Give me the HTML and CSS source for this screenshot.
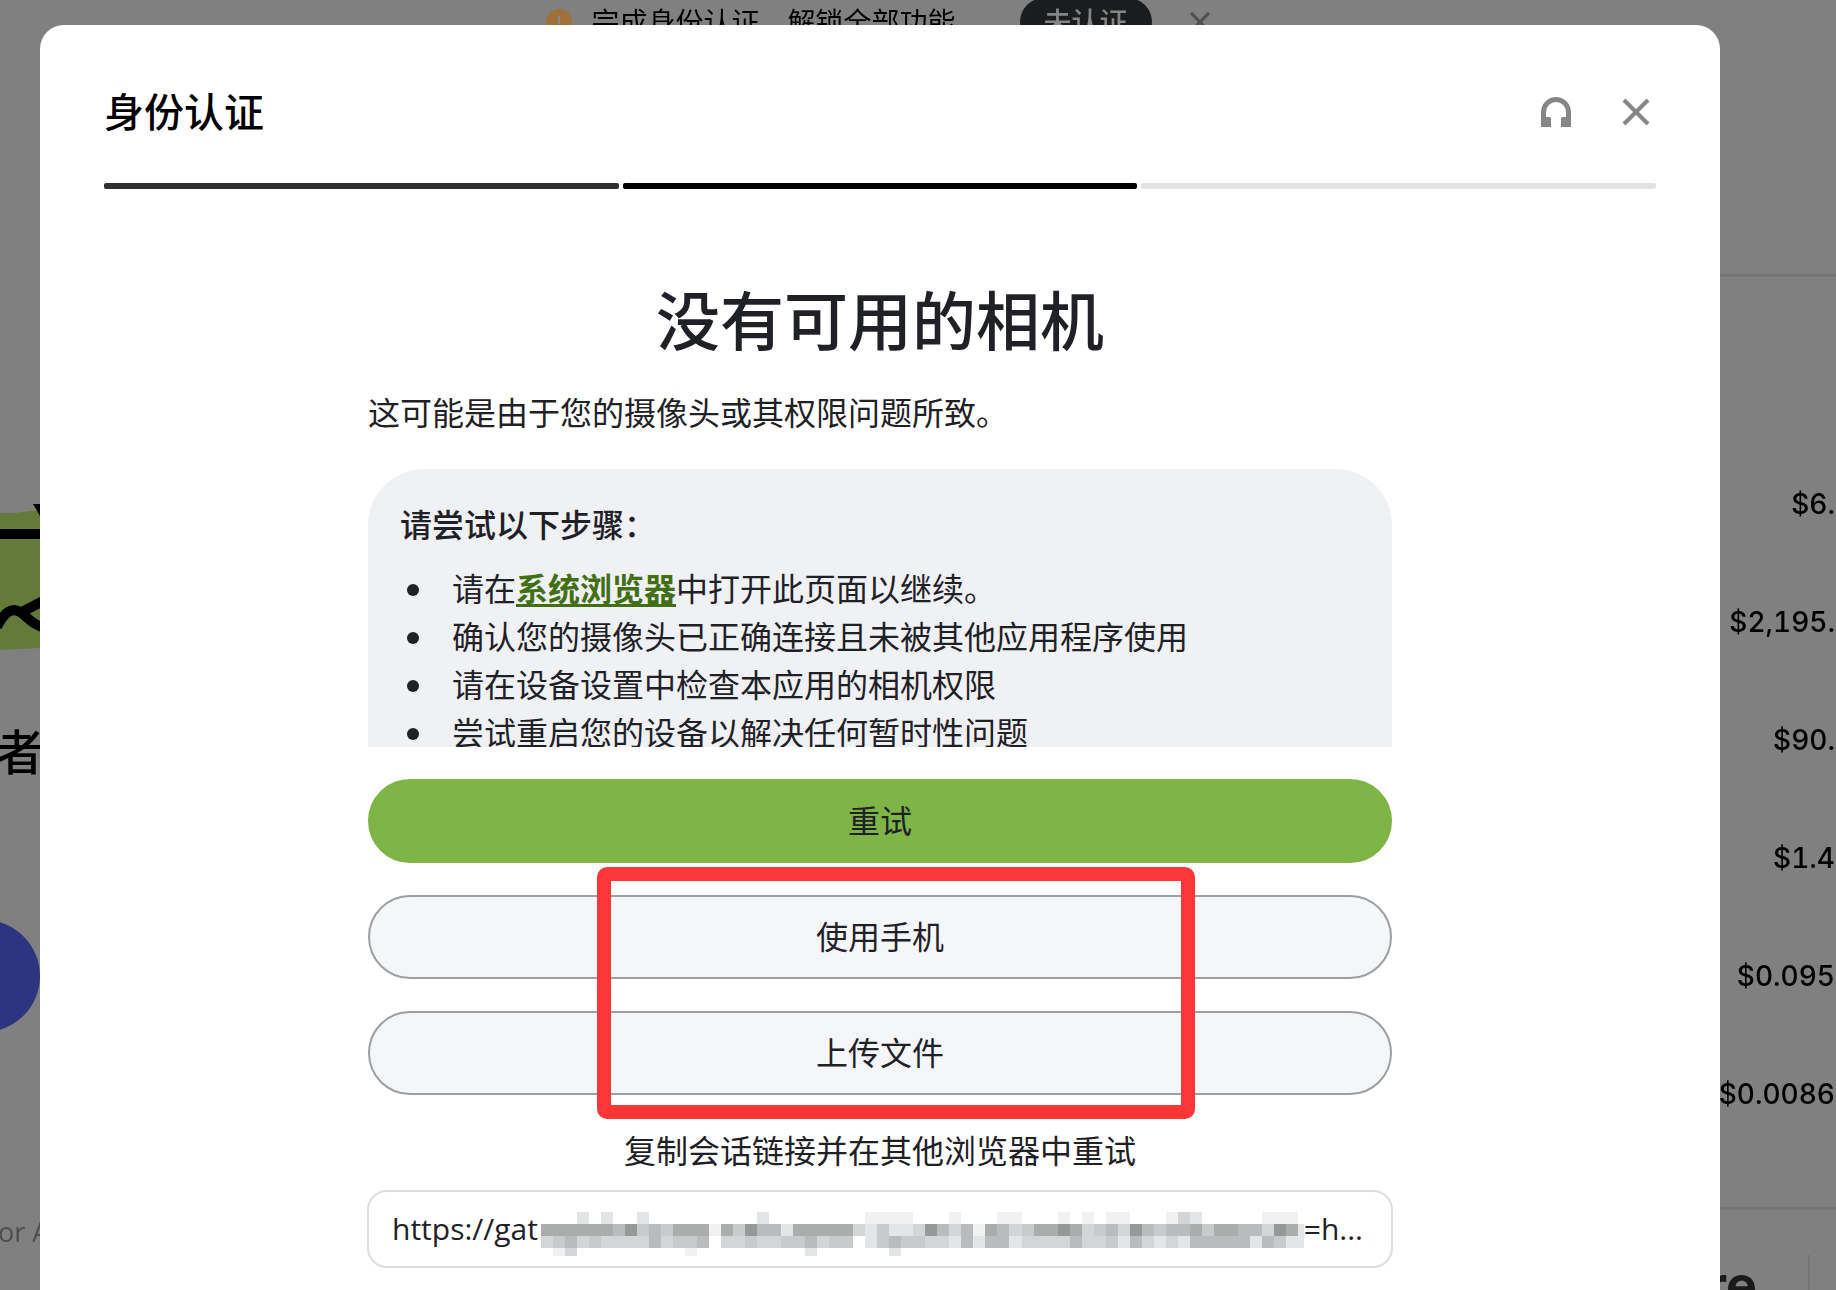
FILE: index.html
```
<!DOCTYPE html>
<html lang="zh-CN">

<head>
    <title>身份认证</title>
    <meta charset="UTF-8">
    <meta name="viewport" content="width=device-width, initial-scale=1">
    <link rel="stylesheet" href="styles.css">
</head>

<body>
    <div class="page">
        <div class="banner">
            <svg class="banner-icon" viewBox="0 0 26 26"><circle cx="13" cy="13" r="13" fill="#a1703a"/><path d="M13 7v8M13 18v2" stroke="#8a8a8a" stroke-width="2"/></svg>
            <span class="banner-text">完成身份认证，解锁全部功能</span>
            <button class="banner-pill">未认证</button>
            <button class="banner-close" aria-label="关闭"><svg viewBox="0 0 20 20"><path d="M1 1l18 18M19 1L1 19"/></svg></button>
        </div>
        <div class="columns">
            <div class="promo">
                <svg class="art" viewBox="0 0 40 150">
                    <path d="M0 5L14 5 40 2V140L0 142z" fill="#647a3b"/>
                    <path d="M0 26H40" stroke="#000" stroke-width="10"/>
                    <path d="M33 -4H40V8z"/>
                    <path d="M-3 119C4 104 12 99 20 104C27 108 32 117 43 119M20 105L43 93" fill="none" stroke="#000" stroke-width="10"/>
                </svg>
                <div class="promo-title">者</div>
                <svg class="dot" viewBox="0 0 40 112"><circle cx="-16" cy="56" r="56" fill="#2d3480"/></svg>
                <div class="promo-note">or A</div>
            </div>
            <div class="market">
                <div class="prices">
                    <div>$6.</div>
                    <div>$2,195.</div>
                    <div>$90.</div>
                    <div>$1.4</div>
                    <div>$0.095</div>
                    <div>$0.0086</div>
                </div>
                <div class="market-foot"><span>re</span></div>
            </div>
        </div>
    </div>

    <div class="modal" role="dialog" aria-labelledby="title">
        <div class="modal-head">
            <h2 id="title">身份认证</h2>
            <div class="tools">
                <button aria-label="客服"><svg width="30" height="30" viewBox="0 0 30 30"><path d="M0 30V15A15 15 0 0 1 30 15V30H20V22Q20 20 22 20H25V15A10 10 0 0 0 5 15V20H8Q10 20 10 22V30z" fill="#858787"/></svg></button>
                <button aria-label="关闭"><svg width="28" height="28" viewBox="0 0 28 28"><path d="M2 2L26 26M26 2L2 26" stroke="#858787" stroke-width="4"/></svg></button>
            </div>
        </div>
        <div class="steps">
            <span class="done"></span>
            <span class="now"></span>
            <span></span>
        </div>
        <div class="content">
            <h1>没有可用的相机</h1>
            <p class="reason">这可能是由于您的摄像头或其权限问题所致。</p>
            <div class="tips">
                <h3>请尝试以下步骤：</h3>
                <ul>
                    <li>请在<a href="#">系统浏览器</a>中打开此页面以继续。</li>
                    <li>确认您的摄像头已正确连接且未被其他应用程序使用</li>
                    <li>请在设备设置中检查本应用的相机权限</li>
                    <li>尝试重启您的设备以解决任何暂时性问题</li>
                </ul>
            </div>
            <button class="btn primary">重试</button>
            <div class="others">
                <button class="btn">使用手机</button>
                <button class="btn">上传文件</button>
                <div class="mark"></div>
            </div>
            <label class="copy-label" for="link">复制会话链接并在其他浏览器中重试</label>
            <div class="field">
                <input id="link" type="text" value="https://gat" readonly>
                <svg id="mask" class="mask" viewBox="0 0 762 48" preserveAspectRatio="none"></svg>
                <span>=h...</span>
            </div>
        </div>
    </div>

    <script src="mask.js"></script>
</body>

</html>
```
FILE: styles.css
```
* {
    box-sizing: border-box;
}

body {
    margin: 0;
    background-color: #808080;
    color: #1f2126;
    font-family: "Open Sans", "Noto Sans CJK SC", sans-serif;
    font-size: 32px;
    line-height: 48px;
    height: 100vh;
    overflow: hidden;
}

h1, h2, h3, p, ul {
    margin: 0;
    padding: 0;
}

button {
    font-family: inherit;
    cursor: pointer;
}

svg {
    display: block;
}

/* page behind the dialog */
.page {
    position: fixed;
    inset: 0;
    overflow: hidden;
    color: #000;
    display: flex;
    flex-direction: column;
}

.banner {
    display: flex;
    align-items: center;
    justify-content: center;
    height: 44px;
    flex: none;
    padding: 0 120px 0 40px;
    font-size: 28px;
    line-height: 44px;
}

.banner-icon {
    width: 26px;
    height: 26px;
    margin-right: 19px;
}

.banner-pill {
    margin: 0 38px 0 64px;
    padding: 0 24px;
    height: 48px;
    border: 0;
    border-radius: 24px;
    background-color: #1a1c1e;
    color: #858585;
    font-size: 28px;
    font-weight: 500;
    line-height: 44px;
}

.banner-close {
    padding: 0;
    border: 0;
    background: none;
}

.banner-close svg {
    width: 20px;
    height: 20px;
    fill: none;
    stroke: #4f4f4f;
    stroke-width: 3;
}

.columns {
    display: flex;
    justify-content: space-between;
    flex: 1;
}

.promo {
    width: 40px;
    padding-top: 464px;
    white-space: nowrap;
}

.art {
    width: 40px;
    height: 150px;
    overflow: visible;
}

.promo-title {
    margin: 58px 0 132px -4px;
    font-size: 48px;
    font-weight: 500;
    line-height: 72px;
}

.dot {
    width: 40px;
    height: 112px;
}

.promo-note {
    margin: 176px 0 0 -2px;
    color: #4d4d4d;
    font-size: 27px;
    line-height: 48px;
}

.market {
    width: 116px;
    padding-top: 230px;
    font-family: Inter, sans-serif;
}

.prices {
    border: solid #747474;
    border-width: 3px 0;
    padding: 168px 0 54px;
    font-size: 28px;
    font-weight: 500;
    font-variant-numeric: tabular-nums;
    line-height: 118px;
}

.prices div {
    display: flex;
    justify-content: flex-end;
    padding-right: 1px;
}

.market-foot {
    display: flex;
    justify-content: flex-end;
    margin: 45px 26px 0 0;
    padding-right: 51px;
    border-right: 2px solid #747474;
    color: #1a1a1a;
    font-size: 52px;
    font-weight: 700;
    line-height: 60px;
}

/* dialog */
.modal {
    position: relative;
    margin: 25px 116px 0 40px;
    padding: 57px 64px 22px;
    min-height: calc(100vh - 25px);
    background-color: #fff;
    border-radius: 24px 24px 0 0;
}

.modal-head {
    display: flex;
    justify-content: space-between;
    align-items: center;
}

.modal-head h2 {
    color: #000;
    font-size: 40px;
    font-weight: 500;
    line-height: 60px;
}

.tools {
    display: flex;
    gap: 40px;
}

.tools button {
    display: flex;
    align-items: center;
    justify-content: center;
    width: 40px;
    height: 40px;
    padding: 0;
    border: 0;
    background: none;
}

.steps {
    display: flex;
    gap: 4px;
    margin-top: 41px;
}

.steps span {
    flex: 1;
    height: 6px;
    border-radius: 2px;
    background-color: #e2e2e2;
}

.steps .done {
    background-color: #303030;
}

.steps .now {
    background-color: #000;
}

.content {
    display: flex;
    flex-direction: column;
    max-width: 1024px;
    margin: 90px auto 0;
}

.content h1 {
    font-size: 64px;
    font-weight: 500;
    line-height: 84px;
    text-align: center;
}

.reason {
    margin-top: 26px;
}

.tips {
    height: 278px;
    margin: 32px 0;
    padding: 32px;
    overflow: hidden;
    background-color: #eff1f5;
    border-radius: 56px 56px 0 0;
}

.tips h3 {
    margin-bottom: 16px;
    font-size: 32px;
    font-weight: 500;
}

.tips ul {
    list-style: none;
}

.tips li::before {
    content: "";
    display: inline-block;
    width: 12px;
    height: 12px;
    margin: 0 33px 5px 7px;
    border-radius: 50%;
    background-color: #1f2126;
}

.tips a {
    color: #436f14;
    font-weight: 700;
    text-decoration-thickness: 3px;
    text-underline-offset: 3px;
    text-decoration-skip-ink: none;
}

.btn {
    width: 100%;
    height: 84px;
    border: 2px solid #9c9ea1;
    border-radius: 42px;
    background-color: #f5f6fa;
    color: #1f2126;
    font-size: 32px;
    line-height: 48px;
}

.primary {
    border-color: #7eb546;
    background-color: #7eb546;
}

.others {
    position: relative;
    display: flex;
    flex-direction: column;
    gap: 32px;
    margin: 32px 0;
}

/* red frame around the two alternatives */
.mark {
    position: absolute;
    top: -28px;
    right: 197px;
    bottom: -24px;
    left: 229px;
    border: 14px solid #fd3737;
    border-radius: 10px;
    pointer-events: none;
}

.copy-label {
    text-align: center;
}

.field {
    display: flex;
    align-items: center;
    height: 78px;
    margin: 15px -1px 0;
    padding: 0 28px 0 23px;
    border: 2px solid #dcdddf;
    border-radius: 20px;
    font-size: 30px;
}

.field input {
    width: 149px;
    padding: 0;
    border: 0;
    outline: 0;
    background: none;
    color: inherit;
    font: inherit;
}

.mask {
    flex: 1;
    min-width: 0;
    height: 48px;
    margin-top: 14px;
}
```
FILE: mask.js
```
// one character per 12px cell, 9 = darkest, f = lightest, . = empty
var rows = [
    '...e.e..e.........e........ffff...f...ff...f.f.ff...fde.....fff.',
    'aaaaaab9cbcaaafac9bbeaaaaadeceed9bdbfabdcaa9adcbd9bcbbacaabbd9ae',
    'dcbdcddddbdccb.ddcddccbdcc.ecbccddebebbeddddbddcebdedebbbbbebcee',
    '.fd.........f.........e......e..................................'
];
var shades = {
    '9': '#979898', 'a': '#abacac', 'b': '#b9bbbc', 'c': '#c8cacb',
    'd': '#d3d5d6', 'e': '#e4e5e6', 'f': '#f1f1f2'
};
var mask = document.getElementById('mask');
rows.forEach(function (row, y) {
    for (var x = 0; x < row.length; x++) {
        if (row[x] == '.') continue;
        var r = document.createElementNS('http://www.w3.org/2000/svg', 'rect');
        r.setAttribute('x', x * 12);
        r.setAttribute('y', y * 12);
        r.setAttribute('width', 12);
        r.setAttribute('height', y == 3 ? 8 : 12);
        r.setAttribute('fill', shades[row[x]]);
        r.setAttribute('shape-rendering', 'crispEdges');
        mask.appendChild(r);
    }
});
```
